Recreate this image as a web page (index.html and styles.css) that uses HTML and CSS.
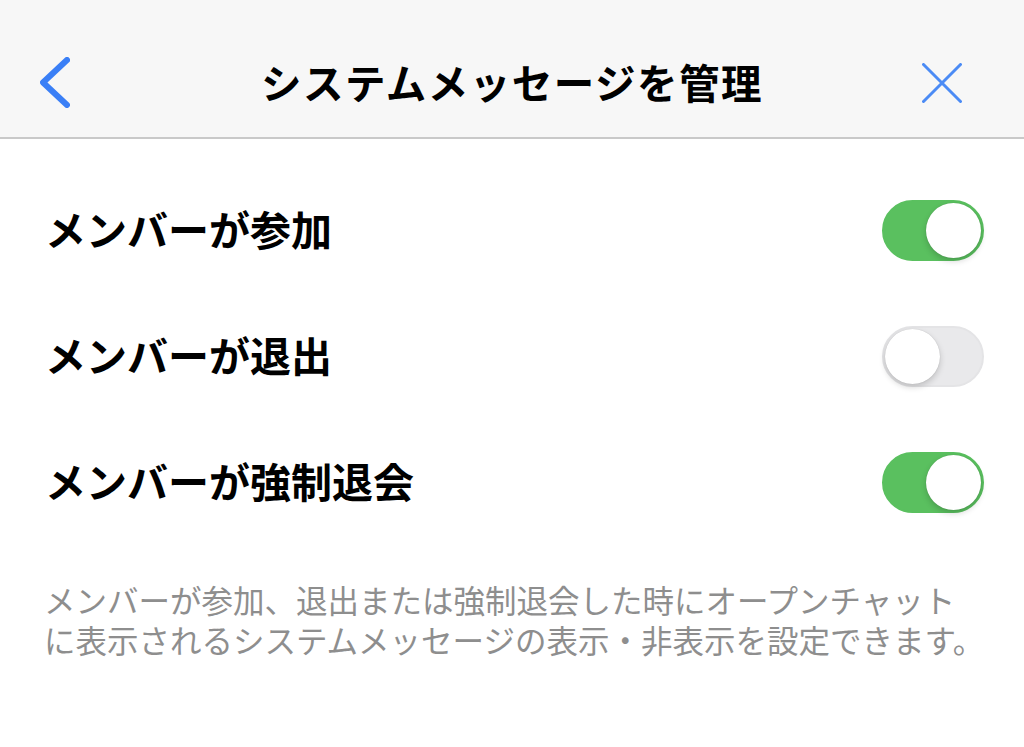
FILE: index.html
```html
<!DOCTYPE html>
<html lang="ja">
<head>
    <meta charset="UTF-8">
    <meta name="viewport" content="width=device-width, initial-scale=1.0">
    <title>システムメッセージを管理</title>
    <link rel="stylesheet" href="styles.css">
</head>
<body>
    <header class="nav-bar">
        <a class="nav-back" href="#">
            <svg width="30" height="51" viewBox="0 0 30 51">
                <polyline points="27,3 3,25.5 27,48" fill="none" stroke="#3a7ff6" stroke-width="6" stroke-linecap="round" stroke-linejoin="round"/>
            </svg>
        </a>
        <h1 class="nav-title">システムメッセージを管理</h1>
        <a class="nav-close" href="#">
            <svg width="40" height="40" viewBox="0 0 40 40">
                <path d="M1.5 1.5 L38.5 38.5 M38.5 1.5 L1.5 38.5" stroke="#4b8bf5" stroke-width="3" stroke-linecap="round"/>
            </svg>
        </a>
    </header>

    <main class="settings">
        <div class="setting-row">
            <span class="setting-label">メンバーが参加</span>
            <span class="toggle on"><span class="knob"></span></span>
        </div>
        <div class="setting-row">
            <span class="setting-label">メンバーが退出</span>
            <span class="toggle"><span class="knob"></span></span>
        </div>
        <div class="setting-row">
            <span class="setting-label">メンバーが強制退会</span>
            <span class="toggle on"><span class="knob"></span></span>
        </div>

        <p class="setting-note">
            メンバーが参加、退出または強制退会した時にオープンチャット<br>
            に表示されるシステムメッセージの表示・非表示を設定できます。
        </p>
    </main>
</body>
</html>
```

FILE: styles.css
```css
body {
    margin: 0;
    background-color: #ffffff;
    font-family: "Noto Sans CJK JP", "Noto Sans", sans-serif;
    color: #000000;
}

.nav-bar {
    display: grid;
    grid-template-columns: 1fr auto 1fr;
    align-items: center;
    height: 109px;
    padding-top: 28px;
    background-color: #f7f7f7;
    border-bottom: 2px solid #c9c9c9;
}

.nav-back {
    justify-self: start;
    display: flex;
    padding-left: 40px;
}

.nav-close {
    justify-self: end;
    display: flex;
    padding-right: 62px;
}

.nav-title {
    margin: 0;
    font-size: 40.5px;
    font-weight: 700;
    line-height: 1;
    letter-spacing: 1.5px;
}

.settings {
    padding-top: 28px;
}

.setting-row {
    display: flex;
    align-items: center;
    justify-content: space-between;
    height: 126px;
    padding: 0 40px 0 45px;
}

.setting-label {
    font-size: 41px;
    font-weight: 700;
    line-height: 1;
    margin-top: -4px;
}

.toggle {
    position: relative;
    box-sizing: border-box;
    width: 102px;
    height: 61px;
    border-radius: 31px;
    background-color: #e9e9eb;
    border: 2px solid #e4e4e6;
}

.toggle.on {
    background-color: #5ac05f;
    border-color: #5ac05f;
}

.knob {
    position: absolute;
    top: 1px;
    left: 1px;
    width: 55px;
    height: 55px;
    border-radius: 50%;
    background-color: #ffffff;
    box-shadow: 0 3px 6px rgba(0, 0, 0, 0.18), 0 0 1px rgba(0, 0, 0, 0.2);
}

.toggle.on .knob {
    left: auto;
    right: 1px;
}

.setting-note {
    margin: 34px 0 0;
    padding: 0 20px 0 44px;
    font-size: 31.5px;
    line-height: 40px;
    color: #8e8e8e;
}
```
